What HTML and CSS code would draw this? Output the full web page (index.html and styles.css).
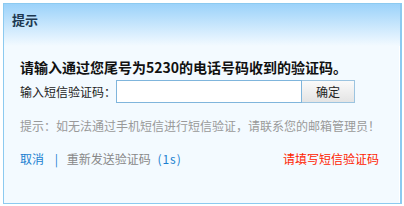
FILE: index.html
```html
<!DOCTYPE html>
<html lang="zh-CN">
<head>
  <meta charset="UTF-8" />
  <title>提示</title>
  <link rel="stylesheet" href="styles.css">
</head>
<body>

<!-- 短信验证弹窗 -->
<div class="dialog">
  <div class="dialog-head">
    <div class="dialog-title">提示</div>
  </div>
  <div class="dialog-body">
    <div class="main-tip">请输入通过您尾号为5230的电话号码收到的验证码。</div>
    <div class="code-row">
      <label class="code-label" for="smsCode">输入短信验证码：</label>
      <input class="code-input" id="smsCode" type="text" />
      <button class="btn-ok" type="button">确定</button>
    </div>
    <div class="hint">提示：如无法通过手机短信进行短信验证，请联系您的邮箱管理员！</div>
    <div class="foot-row">
      <div class="foot-left">
        <a href="#" class="link">取消</a>
        <span class="sep">|</span>
        <span class="resend">重新发送验证码</span>
        <span class="count">(1s)</span>
      </div>
      <div class="error">请填写短信验证码</div>
    </div>
  </div>
</div>

</body>
</html>
```

FILE: styles.css
```css
body {
  margin: 0;
  padding: 0;
  background: #fff;
  font-family: "Noto Sans CJK SC", "Liberation Sans", sans-serif;
  font-size: 12px;
}

.dialog {
  margin: 3px;
  width: 396px;
  height: 199px;
  border: 1px solid #8ccaf0;
  border-right-width: 2px;
  box-shadow: inset -1px 0 0 #fff;
  background: #f3faff;
}

.dialog-head {
  height: 42px;
  padding: 7px 8px 0;
  box-sizing: border-box;
  background: linear-gradient(to bottom, #9bd2fa, #f3faff);
}

.dialog-title {
  font-size: 13px;
  font-weight: bold;
  line-height: 18px;
  color: #1d3850;
}

.dialog-body {
  padding: 0 21px 0 16px;
}

.main-tip {
  margin-top: 11px;
  font-size: 14px;
  font-weight: bold;
  line-height: 20px;
  color: #111;
  white-space: nowrap;
}

.code-row {
  display: flex;
  align-items: center;
  margin-top: 3px;
}

.code-label {
  width: 96px;
  color: #222;
  line-height: 18px;
}

.code-input {
  width: 186px;
  height: 23px;
  box-sizing: border-box;
  margin: 0;
  border: 1px solid #7fb5dc;
  background: #fff;
  outline: none;
}

.btn-ok {
  width: 53px;
  height: 23px;
  margin: 0;
  border: 1px solid #9cc4e0;
  border-left: none;
  background: linear-gradient(to bottom, #fafafa, #e4e4e4);
  font-family: inherit;
  font-size: 12px;
  color: #222;
  padding: 0;
}

.hint {
  margin-top: 14px;
  line-height: 18px;
  color: #999;
  white-space: nowrap;
}

.foot-row {
  display: flex;
  justify-content: space-between;
  margin-top: 15px;
  line-height: 18px;
}

.link {
  color: #1a7fd0;
  text-decoration: none;
}

.sep {
  color: #1a7fd0;
  margin: 0 6px 0 8px;
}

.resend {
  color: #888;
}

.count {
  color: #1a7fd0;
  margin-left: 4px;
  letter-spacing: 1px;
}

.error {
  color: #ff2200;
}
```
